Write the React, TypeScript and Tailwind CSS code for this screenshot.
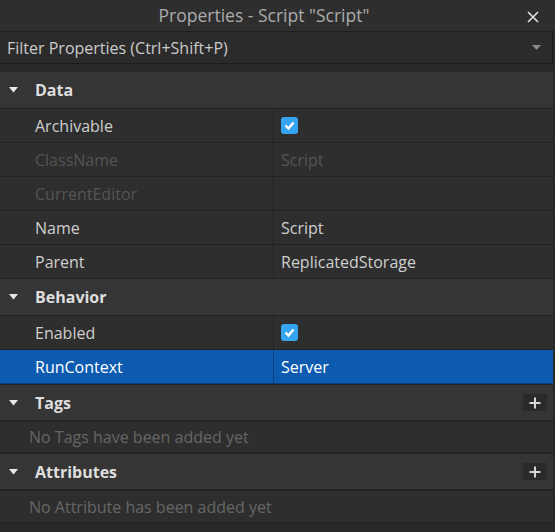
import clsx from 'clsx'

const font = "font-['Open_Sans','Lato',sans-serif]"

function Caret() {
  return (
    <svg width="9" height="6" viewBox="0 0 9 6" className="shrink-0">
      <polygon points="0,0 9,0 4.5,5.5" fill="#e8e8e8" />
    </svg>
  )
}

function Check() {
  return (
    <div className="w-[17px] h-[17px] rounded-[3px] bg-[#35a5f2] flex items-center justify-center">
      <svg width="13" height="13" viewBox="0 0 13 13">
        <polyline points="2.5,6.5 5.5,9.5 10.5,3.5" fill="none" stroke="#ffffff" strokeWidth="2.4" />
      </svg>
    </div>
  )
}

function PlusButton() {
  return (
    <div className="w-[24px] h-[17px] bg-[#2a2a2a] flex items-center justify-center">
      <svg width="12" height="12" viewBox="0 0 12 12">
        <path d="M6 0.5V11.5M0.5 6H11.5" stroke="#d6d6d6" strokeWidth="2" />
      </svg>
    </div>
  )
}

function Header({ title, plus, tall }: { title: string; plus?: boolean; tall?: boolean }) {
  return (
    <div className={clsx('bg-[#353535] flex items-center pl-[9px] pr-[6px]', tall ? 'h-[36px]' : 'h-[35px]')}>
      <Caret />
      <span className="ml-[17px] text-[16px] font-bold text-[#dedede]">{title}</span>
      {plus && (
        <div className="ml-auto">
          <PlusButton />
        </div>
      )}
    </div>
  )
}

type RowProps = {
  name: string
  value?: string
  checked?: boolean
  disabled?: boolean
  selected?: boolean
}

function Row({ name, value, checked, disabled, selected }: RowProps) {
  return (
    <div
      className={clsx(
        'flex h-[34px] border-b text-[16px]',
        selected ? 'bg-[#0c5bb1] border-[#093f7a] text-white' : 'bg-[#2e2e2e] border-[#232323]',
        !selected && (disabled ? 'text-[#545454]' : 'text-[#cfcfcf]')
      )}
    >
      <div
        className={clsx(
          'w-[274px] shrink-0 border-r pl-[35px] flex items-center',
          selected ? 'border-[#093f7a]' : 'border-[#232323]'
        )}
      >
        {name}
      </div>
      <div className="flex-1 pl-[7px] flex items-center">
        {checked ? <Check /> : value}
      </div>
    </div>
  )
}

export default function App() {
  return (
    <div className={clsx('w-[555px] h-[532px] bg-[#282828] flex flex-col overflow-hidden', font)}>
      {/* Title bar */}
      <div className="h-[32px] bg-[#2e2e2e] flex items-center relative border-b border-[#1f1f1f] pr-[27px] shrink-0">
        <span className="w-full text-center text-[17.5px] text-[#ababab]">Properties - Script "Script"</span>
        <svg width="12" height="12" viewBox="0 0 12 12" className="absolute right-[16px] top-[11px]">
          <path d="M1 1L11 11M11 1L1 11" stroke="#e0e0e0" strokeWidth="1.6" />
        </svg>
      </div>

      <div className="mr-[2px] flex flex-col flex-1">
        {/* Filter */}
        <div className="h-[32px] bg-[#2b2b2b] border-b border-r border-[#1c1c1c] flex items-center pl-[7px] pr-[11px] shrink-0">
          <span className="text-[16px] text-[#cccccc]">Filter Properties (Ctrl+Shift+P)</span>
          <svg width="9" height="5" viewBox="0 0 9 5" className="ml-auto">
            <polygon points="0,0 9,0 4.5,5" fill="#8a8a8a" />
          </svg>
        </div>

        <div className="h-[8px] shrink-0" />

        <div className="border-b border-[#232323]">
          <Header title="Data" tall />
        </div>
        <Row name="Archivable" checked />
        <Row name="ClassName" value="Script" disabled />
        <Row name="CurrentEditor" disabled />
        <Row name="Name" value="Script" />
        <Row name="Parent" value="ReplicatedStorage" />

        <div className="border-b border-[#232323]">
          <Header title="Behavior" tall />
        </div>
        <Row name="Enabled" checked />
        <Row name="RunContext" value="Server" selected />

        <div className="h-[1px] bg-[#232323]" />
        <Header title="Tags" plus />
        <div className="h-[2px] bg-[#232323]" />
        <div className="h-[30px] bg-[#2e2e2e] flex items-center pl-[29px] text-[16px] text-[#666666]">
          No Tags have been added yet
        </div>
        <div className="h-[2px] bg-[#232323]" />
        <Header title="Attributes" plus />
        <div className="h-[2px] bg-[#232323]" />
        <div className="h-[31px] bg-[#2e2e2e] flex items-center pl-[29px] text-[16px] text-[#666666]">
          No Attribute has been added yet
        </div>
        <div className="h-px bg-[#232323]" />
      </div>
    </div>
  )
}
